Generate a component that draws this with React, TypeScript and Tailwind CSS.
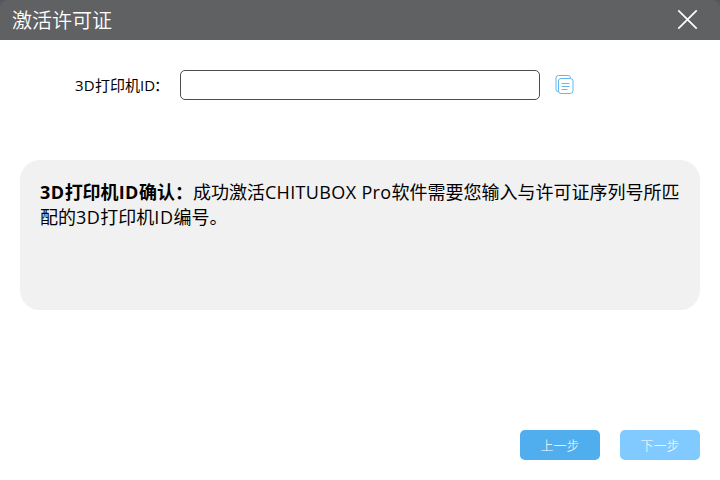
import type { ReactNode } from "react";

function Latin({ children, className = "tracking-[0.35px]" }: { children: ReactNode; className?: string }) {
  return <span className={className}>{children}</span>;
}

function TitleBar() {
  return (
    <header className="flex h-10 items-center justify-between rounded-t-lg bg-[#606163] pr-[22px] pl-3 text-white">
      <h1 className="pt-px text-[20px] leading-10 font-[350]">激活许可证</h1>
      <button type="button" aria-label="关闭" className="mb-px flex">
        <svg width="21" height="21" viewBox="0 0 21 21" fill="none" stroke="currentColor" strokeWidth="1.7">
          <path d="M1.3 1.3 19.7 19.7M19.7 1.3 1.3 19.7" />
        </svg>
      </button>
    </header>
  );
}

function CopyIcon() {
  return (
    <svg width="20" height="20" viewBox="0 0 20 20" fill="none" stroke="#62b8f0" strokeWidth="1">
      <path d="M3.5 16.5h-.5A2 2 0 0 1 1 14.500V3A2.500 2.500 0 0 1 3.500.5H13a2.500 2.500 0 0 1 2.500 2.500" />
      <rect x="3.500" y="3.500" width="14.500" height="15" rx="2.500" />
      <path d="M6.500 8.500h8M6.500 11.500h8M6.500 14.500h6" />
    </svg>
  );
}

export default function App() {
  return (
    <div className="h-[480px] w-[720px] bg-[#58595b] font-['Open_Sans','Noto_Sans_CJK_SC',sans-serif] text-black">
      <TitleBar />
      <main className="flex h-[440px] flex-col bg-white px-5 pt-[30px] pb-5">
        <div className="flex h-[30px] items-center">
          <label htmlFor="printer-id" className="ml-[55px] w-[105px] text-[15px] leading-[30px] whitespace-nowrap">
            <Latin className="tracking-[0.25px]">3D</Latin>打印机<Latin className="tracking-normal">ID</Latin>
            <span className="-ml-px">：</span>
          </label>
          <input id="printer-id" className="h-[30px] w-[360px] rounded-[5px] border border-[#4d4d4d] bg-white px-2 outline-none" />
          <button type="button" aria-label="复制" className="mb-px ml-[15px] flex">
            <CopyIcon />
          </button>
        </div>
        <section className="mt-[60px] h-[150px] rounded-[20px] bg-[#f1f1f1] px-5 pt-5 text-[18px] leading-[25px] whitespace-nowrap">
          <p>
            <b>
              <Latin className="tracking-[0.5px]">3D</Latin>打印机<Latin className="tracking-[0.5px]">ID</Latin>确认：
            </b>
            成功激活<Latin>CHITUBOX Pro</Latin>软件需要您输入与许可证序列号所匹
            <br />
            配的<Latin className="tracking-[0.5px]">3D</Latin>打印机<Latin className="tracking-[0.5px]">ID</Latin>编号。
          </p>
        </section>
        <footer className="mt-auto flex justify-end gap-5 text-[13px] font-light text-white">
          <button type="button" className="h-[30px] w-20 rounded-[5px] bg-[#50aeee] pt-0.5">上一步</button>
          <button type="button" className="h-[30px] w-20 rounded-[5px] bg-[#80caff] pt-0.5">下一步</button>
        </footer>
      </main>
    </div>
  );
}
